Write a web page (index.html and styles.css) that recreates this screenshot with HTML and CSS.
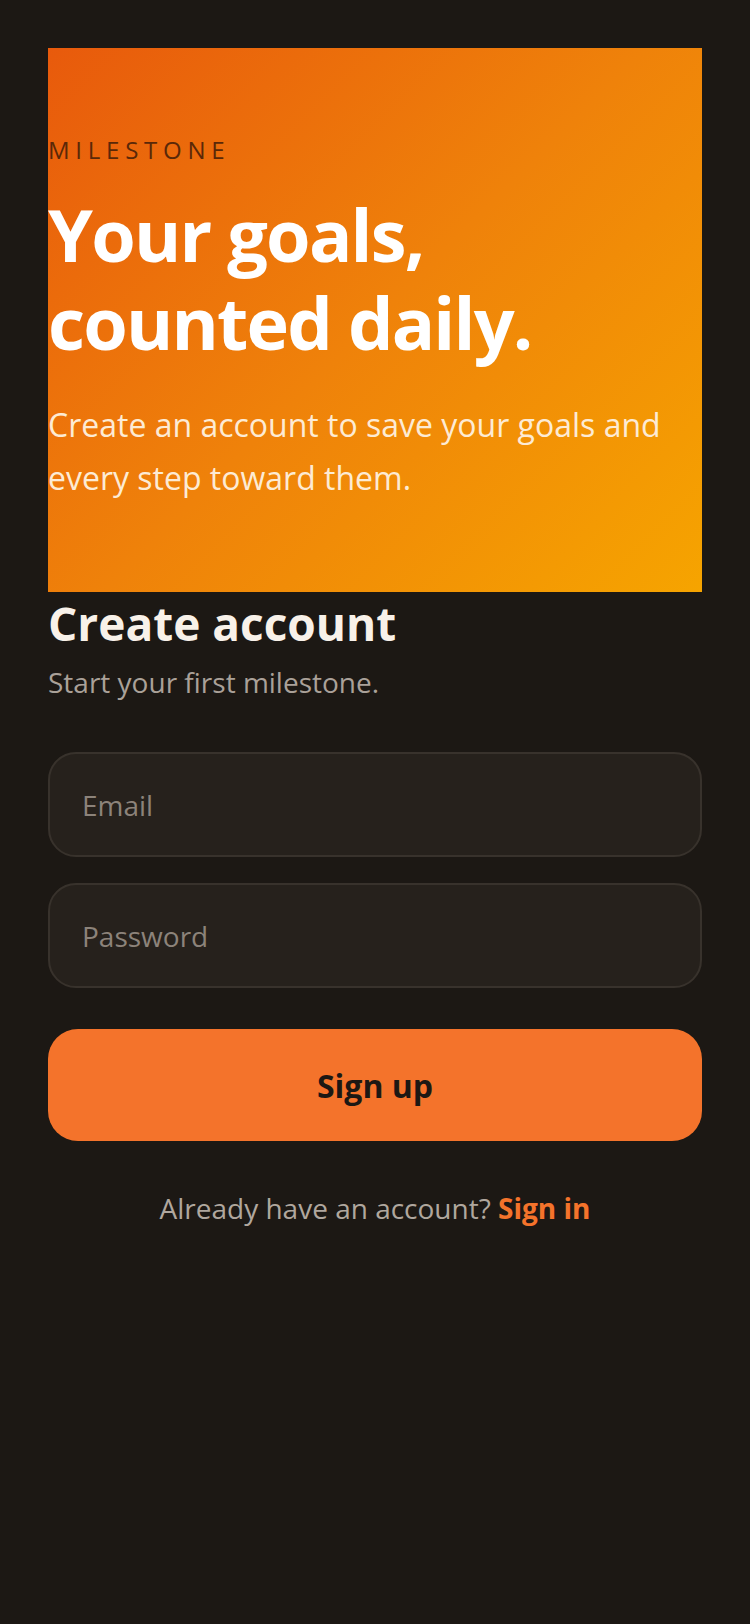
FILE: index.html
```html
<!DOCTYPE html>
<html lang="en">
<head>
  <meta charset="UTF-8">
  <title>Milestone – Create account</title>
  <meta name="viewport" content="width=device-width, initial-scale=1">
  <link rel="stylesheet" href="styles.css">
</head>
<body>
  <main class="signup-page">
    <section class="hero">
      <p class="hero-brand">MILESTONE</p>
      <h1 class="hero-title">Your goals,<br>counted daily.</h1>
      <p class="hero-text">Create an account to save your goals and every step toward them.</p>
    </section>

    <form class="signup-form" autocomplete="off" onsubmit="return false;">
      <h2>Create account</h2>
      <p class="signup-sub">Start your first milestone.</p>
      <div class="fields">
        <input type="email" class="field" placeholder="Email">
        <input type="password" class="field" placeholder="Password">
      </div>
      <button type="submit" class="signup-btn">Sign up</button>
      <p class="signin-note">Already have an account? <a href="#">Sign in</a></p>
    </form>
  </main>
</body>
</html>
```

FILE: styles.css
```css
/* Global resets */
* { box-sizing: border-box; }
html, body { margin: 0; padding: 0; }

body {
  background: #1c1814;
  font-family: 'Open Sans', 'Noto Sans', Arial, sans-serif;
  color: #f7efe6;
  min-height: 100vh;
}

.signup-page {
  padding: 48px;
  display: flex;
  flex-direction: column;
}

/* Hero block */
.hero {
  background: linear-gradient(135deg, #e85a0c 0%, #ef820a 50%, #f6a400 100%);
  padding: 86px 0 88px;
}

.hero-brand {
  margin: 0;
  font-size: 24px;
  line-height: 32px;
  letter-spacing: .24em;
  color: #5a2808;
}

.hero-title {
  margin: 24px 0 0;
  font-size: 72px;
  line-height: 88px;
  font-weight: 700;
  letter-spacing: -.025em;
  color: #fff;
}

.hero-text {
  margin: 32px 0 0;
  font-size: 32px;
  line-height: 53px;
  color: #fdebd4;
}

/* Form */
.signup-form {
  display: flex;
  flex-direction: column;
}

.signup-form h2 {
  margin: 4px 0 0;
  font-size: 46px;
  line-height: 1.2;
  font-weight: 700;
  color: #f8f1e9;
}

.signup-sub {
  margin: 10px 0 0;
  font-size: 28px;
  line-height: 42px;
  color: #aaa199;
}

.fields {
  margin-top: 49px;
  display: flex;
  flex-direction: column;
  gap: 26px;
}

.field {
  height: 105px;
  padding: 0 32px;
  border: 2px solid #38322c;
  border-radius: 28px;
  background: #26211c;
  font-family: inherit;
  font-size: 28px;
  color: #f7efe6;
  outline: none;
}

.field::placeholder { color: #8c837a; }
.field:focus { border-color: #f4732b; }

.signup-btn {
  margin-top: 41px;
  height: 112px;
  border: none;
  border-radius: 30px;
  background: #f4732b;
  color: #1c1814;
  font-family: inherit;
  font-size: 32px;
  font-weight: 700;
  cursor: pointer;
}

.signup-btn:hover { background: #e8661e; }

.signin-note {
  margin: 46px 0 0;
  text-align: center;
  font-size: 28px;
  line-height: 42px;
  color: #b0a79e;
}

.signin-note a {
  color: #f4732b;
  font-weight: 700;
  text-decoration: none;
}
```
